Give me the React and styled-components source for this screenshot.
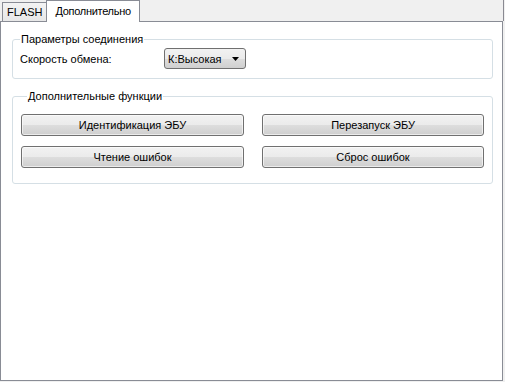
import React from 'react';
import styled, { createGlobalStyle } from 'styled-components';

const GlobalStyle = createGlobalStyle`
  html, body {
    margin: 0;
    padding: 0;
    background: #f0f0f0;
  }
  body {
    font-family: 'Liberation Sans', Arial, sans-serif;
    font-size: 11px;
    color: #000;
  }
`;

const Window = styled.div`
  width: 505px;
  height: 382px;
  display: flex;
  flex-direction: column;
  background: #f0f0f0;
  box-sizing: border-box;
`;

const TabStrip = styled.div`
  height: 21px;
  width: 504px;
  display: flex;
  align-items: flex-end;
  padding-left: 2px;
  box-sizing: border-box;
  border-right: 1px solid #8a8a92;
  position: relative;
  z-index: 1;
`;

const Tab = styled.div`
  box-sizing: border-box;
  height: ${(p) => (p.$active ? '22px' : '19px')};
  margin-bottom: ${(p) => (p.$active ? '-1px' : '0')};
  padding: 0 ${(p) => (p.$active ? '8px' : '4px')};
  display: flex;
  align-items: center;
  border: 1px solid #898c95;
  border-bottom: ${(p) => (p.$active ? 'none' : '0')};
  margin-left: ${(p) => (p.$active ? '-1px' : '0')};
  background: ${(p) =>
    p.$active ? '#fff' : 'linear-gradient(#f3f3f3, #e7e7e7)'};
  padding-top: ${(p) => (p.$active ? '0' : '1px')};
  letter-spacing: ${(p) => (p.$active ? '-0.3px' : '0')};
  line-height: 13px;
  white-space: nowrap;
`;

const Panel = styled.div`
  flex: 1;
  width: 503px;
  box-sizing: border-box;
  border: 1px solid #898c95;
  background: #fff;
  padding: 0 9px 0 11px;
  margin-bottom: 1px;
  display: flex;
  flex-direction: column;
  gap: 11px;
`;

const Group = styled.fieldset`
  margin: 0;
  border: 1px solid #d5dfe5;
  border-radius: 3px;
  padding: ${(p) => p.$pad};
  min-width: 0;
  &:first-child {
    margin-top: 11px;
  }
`;

const Legend = styled.legend`
  padding: 0 1px;
  margin-left: 6px;
  line-height: 13px;
`;

const Row = styled.div`
  display: flex;
  align-items: center;
  padding-left: 6px;
`;

const Label = styled.span`
  width: 144px;
`;

const Combo = styled.div`
  width: 82px;
  height: 21px;
  box-sizing: border-box;
  border: 1px solid #707070;
  border-radius: 3px;
  background: linear-gradient(#f2f2f2 0%, #ebebeb 50%, #dddddd 51%, #cfcfcf 100%);
  display: flex;
  align-items: center;
  justify-content: space-between;
  padding: 0 6px 0 3px;
`;

const Arrow = styled.svg`
  width: 7px;
  height: 4px;
  display: block;
`;

const ButtonGrid = styled.div`
  display: grid;
  grid-template-columns: 223px 222px;
  column-gap: 18px;
  row-gap: 10px;
`;

const Button = styled.div`
  height: 22px;
  box-sizing: border-box;
  border: 1px solid #707070;
  border-radius: 3px;
  background: linear-gradient(#f2f2f2 0%, #ebebeb 50%, #dddddd 51%, #cfcfcf 100%);
  display: flex;
  align-items: center;
  justify-content: center;
  box-shadow: inset 0 0 0 1px rgba(255, 255, 255, 0.6);
`;

export default function App() {
  return (
    <>
      <GlobalStyle />
      <Window>
        <TabStrip>
          <Tab>FLASH</Tab>
          <Tab $active>Дополнительно</Tab>
        </TabStrip>
        <Panel>
          <Group $pad="2px 0 9px 1px">
            <Legend>Параметры соединения</Legend>
            <Row>
              <Label>Скорость обмена:</Label>
              <Combo>
                <span>К:Высокая</span>
                <Arrow viewBox="0 0 7 4">
                  <path d="M0 0h7L3.5 4z" fill="#000" />
                </Arrow>
              </Combo>
            </Row>
          </Group>
          <Group $pad="11px 9px 15px 8px">
            <Legend>Дополнительные функции</Legend>
            <ButtonGrid>
              <Button>Идентификация ЭБУ</Button>
              <Button>Перезапуск ЭБУ</Button>
              <Button>Чтение ошибок</Button>
              <Button>Сброс ошибок</Button>
            </ButtonGrid>
          </Group>
        </Panel>
      </Window>
    </>
  );
}
